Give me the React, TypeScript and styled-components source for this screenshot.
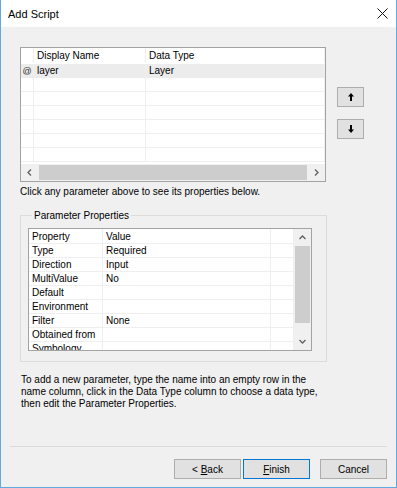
import styled, { createGlobalStyle } from 'styled-components';

const GlobalStyle = createGlobalStyle`
  html, body {
    margin: 0;
    padding: 0;
    background: #ffffff;
  }
  body {
    font-family: "Liberation Sans", Arial, sans-serif;
  }
`;

const Window = styled.div`
  width: 397px;
  height: 488px;
  box-sizing: border-box;
  border: 1px solid #62a9de;
  border-top: none;
  background: #f0f0f0;
  display: flex;
  flex-direction: column;
  overflow: hidden;
  font-size: 10px;
  color: #000;
`;

const TitleBar = styled.div`
  height: 27px;
  background: #ffffff;
  display: flex;
  align-items: center;
  justify-content: space-between;
  padding: 0 8px 0 7px;
`;

const Title = styled.span`
  font-size: 11px;
  color: #000;
`;

const Body = styled.div`
  flex: 1;
  display: flex;
  flex-direction: column;
  padding: 20px 0 0 19px;
`;

const TopRow = styled.div`
  display: flex;
  align-items: flex-start;
`;

const ParamGrid = styled.div`
  width: 306px;
  height: 135px;
  box-sizing: border-box;
  border: 1px solid #a3a3a3;
  background: #ffffff;
  display: flex;
  flex-direction: column;
`;

const GridRows = styled.div`
  flex: 1;
  overflow: hidden;
`;

const GridRow = styled.div<{ $header?: boolean; $selected?: boolean }>`
  display: grid;
  grid-template-columns: 13px 112px 1fr;
  height: ${({ $header }) => ($header ? 16 : 14)}px;
  box-sizing: border-box;
  border-bottom: 1px solid ${({ $header, $selected }) => ($header || $selected ? 'transparent' : '#efefef')};
  background: ${({ $selected }) => ($selected ? '#ececec' : 'transparent')};
`;

const Cell = styled.div<{ $center?: boolean }>`
  display: flex;
  align-items: center;
  justify-content: ${({ $center }) => ($center ? 'center' : 'flex-start')};
  padding-left: ${({ $center }) => ($center ? 0 : 3)}px;
  border-right: 1px solid #efefef;
  white-space: nowrap;
  overflow: hidden;
`;

const RowMarker = styled.span`
  font-size: 9px;
  color: #333;
`;

const HScroll = styled.div`
  height: 17px;
  display: flex;
  background: #f0f0f0;
`;

const ArrowCell = styled.div`
  width: 17px;
  height: 17px;
  flex: none;
  display: flex;
  align-items: center;
  justify-content: center;
`;

const HThumb = styled.div`
  flex: 1;
  margin: 1px 1px;
  background: #cdcdcd;
`;

const SideButtons = styled.div`
  display: flex;
  flex-direction: column;
  gap: 12px;
  margin: 40px 0 0 11px;
`;

const IconButton = styled.button`
  width: 27px;
  height: 20px;
  box-sizing: border-box;
  border: 1px solid #adadad;
  background: #e1e1e1;
  padding: 0;
  display: flex;
  align-items: center;
  justify-content: center;
`;

const Hint = styled.p`
  margin: 3px 0 0;
  line-height: 13px;
`;

const Group = styled.fieldset`
  margin: 11px 0 0;
  width: 307px;
  box-sizing: border-box;
  min-width: 0;
  border: 1px solid #dcdcdc;
  padding: 6px 14px 10px 7px;
`;

const Legend = styled.legend`
  margin-left: 4px;
  padding: 0 2px;
  line-height: 13px;
  font-size: 10px;
`;

const PropList = styled.div`
  height: 123px;
  box-sizing: border-box;
  border: 1px solid #a3a3a3;
  background: #ffffff;
  display: flex;
`;

const PropRows = styled.div`
  flex: 1;
  overflow: hidden;
`;

const PropRow = styled.div<{ $header?: boolean }>`
  display: grid;
  grid-template-columns: 74px 168px 1fr;
  height: ${({ $header }) => ($header ? 15 : 14)}px;
  box-sizing: border-box;
  border-bottom: 1px solid #efefef;
`;

const VScroll = styled.div`
  width: 17px;
  display: flex;
  flex-direction: column;
  background: #f0f0f0;
`;

const VThumb = styled.div`
  height: 77px;
  margin: 0 1px;
  background: #cdcdcd;
`;

const VTrack = styled.div`
  flex: 1;
`;

const Instructions = styled.p`
  margin: 12px 0 0 1px;
  line-height: 12px;
`;

const Footer = styled.div`
  display: flex;
  flex-direction: column;
`;

const Divider = styled.div`
  height: 1px;
  margin: 0 9px;
  background: #dadada;
`;

const ButtonRow = styled.div`
  display: flex;
  justify-content: flex-end;
  padding: 12px 9px 8px;
`;

const DialogButton = styled.button<{ $default?: boolean; $gap: number }>`
  width: 67px;
  height: 20px;
  box-sizing: border-box;
  margin-left: ${({ $gap }) => $gap}px;
  border: 1px solid ${({ $default }) => ($default ? '#0078d7' : '#adadad')};
  background: #e1e1e1;
  font-family: "Liberation Sans", Arial, sans-serif;
  font-size: 10px;
  color: #000;
  padding: 0;
`;

const CloseIcon = () => (
  <svg width="11" height="11" viewBox="0 0 11 11">
    <path d="M0.5 0.5 L10.5 10.5 M10.5 0.5 L0.5 10.5" stroke="#111" strokeWidth="1" fill="none" />
  </svg>
);

const MoveArrow = ({ down }: { down?: boolean }) => (
  <svg width="6" height="8" viewBox="0 0 6 8" style={down ? { transform: 'rotate(180deg)' } : undefined}>
    <polygon points="3,0 6,3.5 4,3.5 4,8 2,8 2,3.5 0,3.5" fill="#000" />
  </svg>
);

const Chevron = ({ dir }: { dir: 'left' | 'right' | 'up' | 'down' }) => {
  const paths = {
    left: 'M4 0.5 L1 3.5 L4 6.5',
    right: 'M1 0.5 L4 3.5 L1 6.5',
    up: 'M0.5 4 L3.5 1 L6.5 4',
    down: 'M0.5 1 L3.5 4 L6.5 1',
  };
  const horizontal = dir === 'left' || dir === 'right';
  return (
    <svg width={horizontal ? 5 : 7} height={horizontal ? 7 : 5} viewBox={horizontal ? '0 0 5 7' : '0 0 7 5'}>
      <path d={paths[dir]} stroke="#606060" strokeWidth="1.3" fill="none" />
    </svg>
  );
};

const properties = [
  ['Type', 'Required'],
  ['Direction', 'Input'],
  ['MultiValue', 'No'],
  ['Default', ''],
  ['Environment', ''],
  ['Filter', 'None'],
  ['Obtained from', ''],
  ['Symbology', ''],
];

const emptyRows = [0, 1, 2, 3, 4, 5];

const App = () => {
  return (
    <>
      <GlobalStyle />
      <Window>
        <TitleBar>
          <Title>Add Script</Title>
          <CloseIcon />
        </TitleBar>
        <Body>
          <TopRow>
            <ParamGrid>
              <GridRows>
                <GridRow $header>
                  <Cell />
                  <Cell>Display Name</Cell>
                  <Cell>Data Type</Cell>
                </GridRow>
                <GridRow $selected>
                  <Cell $center>
                    <RowMarker>@</RowMarker>
                  </Cell>
                  <Cell>layer</Cell>
                  <Cell>Layer</Cell>
                </GridRow>
                {emptyRows.map((i) => (
                  <GridRow key={i}>
                    <Cell />
                    <Cell />
                    <Cell />
                  </GridRow>
                ))}
              </GridRows>
              <HScroll>
                <ArrowCell>
                  <Chevron dir="left" />
                </ArrowCell>
                <HThumb />
                <ArrowCell>
                  <Chevron dir="right" />
                </ArrowCell>
              </HScroll>
            </ParamGrid>
            <SideButtons>
              <IconButton>
                <MoveArrow />
              </IconButton>
              <IconButton>
                <MoveArrow down />
              </IconButton>
            </SideButtons>
          </TopRow>
          <Hint>Click any parameter above to see its properties below.</Hint>
          <Group>
            <Legend>Parameter Properties</Legend>
            <PropList>
              <PropRows>
                <PropRow $header>
                  <Cell>Property</Cell>
                  <Cell>Value</Cell>
                  <Cell />
                </PropRow>
                {properties.map(([name, value]) => (
                  <PropRow key={name}>
                    <Cell>{name}</Cell>
                    <Cell>{value}</Cell>
                    <Cell />
                  </PropRow>
                ))}
              </PropRows>
              <VScroll>
                <ArrowCell>
                  <Chevron dir="up" />
                </ArrowCell>
                <VThumb />
                <VTrack />
                <ArrowCell>
                  <Chevron dir="down" />
                </ArrowCell>
              </VScroll>
            </PropList>
          </Group>
          <Instructions>
            To add a new parameter, type the name into an empty row in the
            <br />
            name column, click in the Data Type column to choose a data type,
            <br />
            then edit the Parameter Properties.
          </Instructions>
        </Body>
        <Footer>
          <Divider />
          <ButtonRow>
            <DialogButton $gap={0}>
              &lt; <u>B</u>ack
            </DialogButton>
            <DialogButton $default $gap={2}>
              <u>F</u>inish
            </DialogButton>
            <DialogButton $gap={10}>Cancel</DialogButton>
          </ButtonRow>
        </Footer>
      </Window>
    </>
  );
};

export default App;
